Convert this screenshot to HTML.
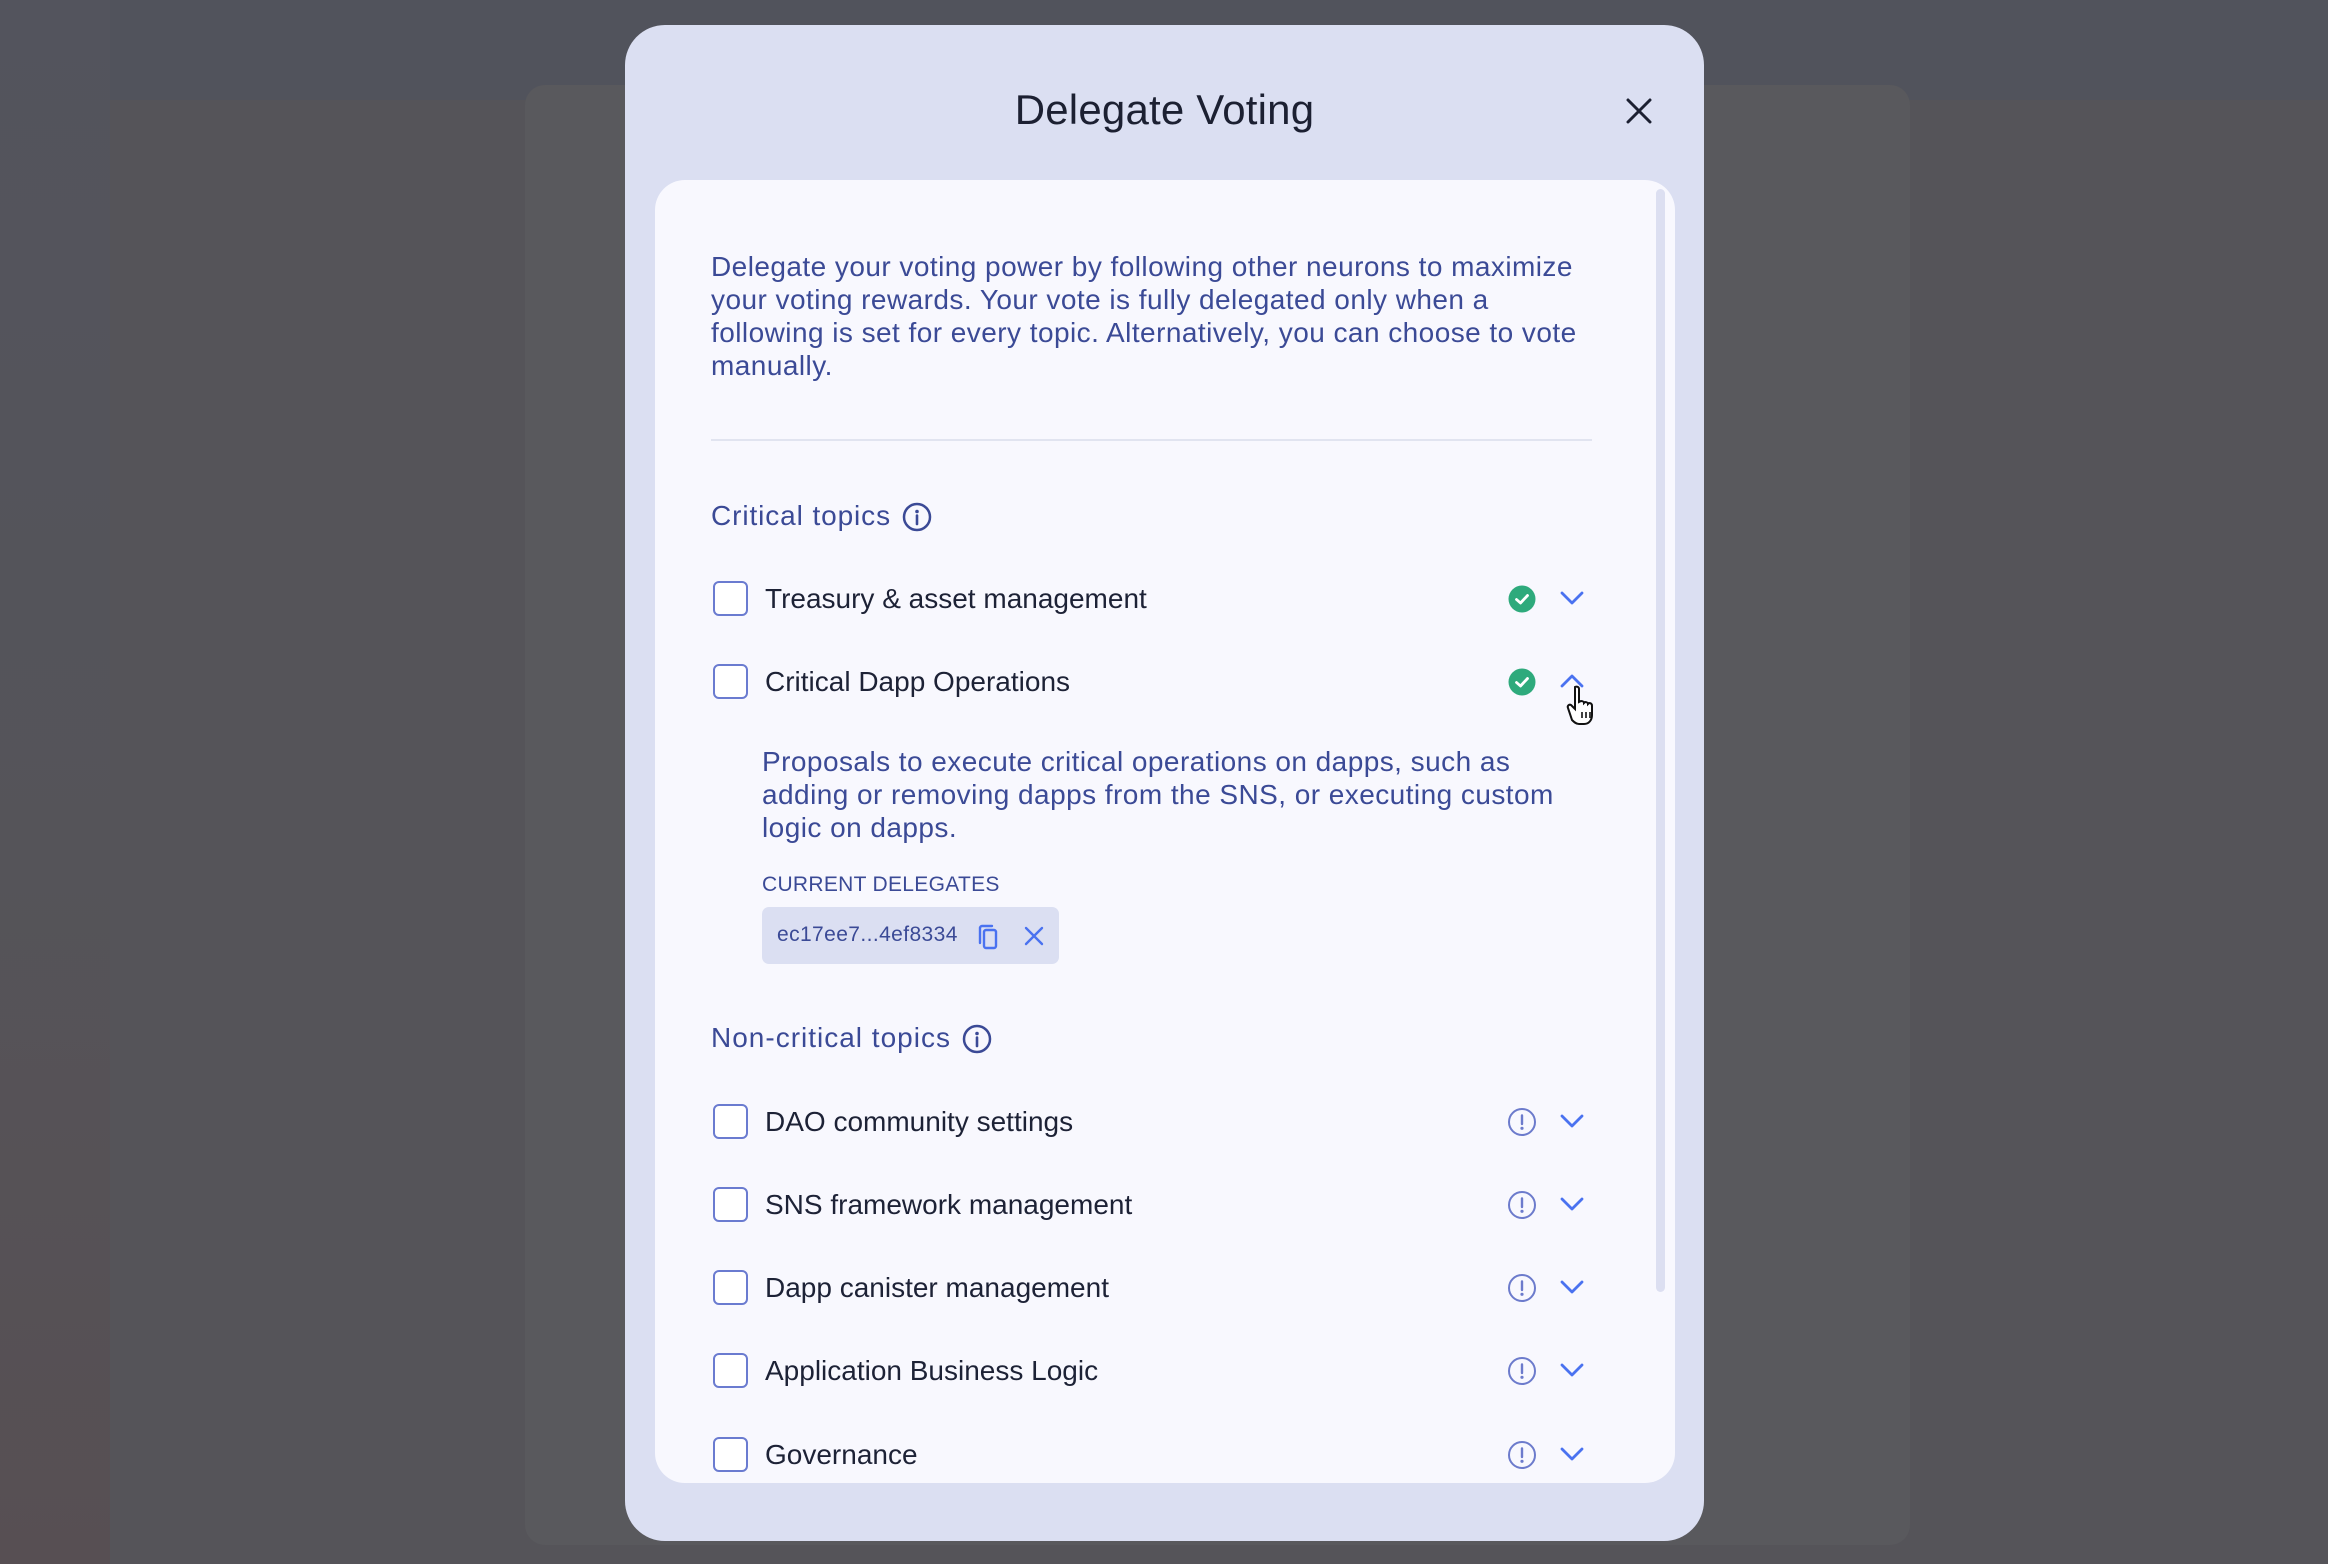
<!DOCTYPE html>
<html><head><meta charset="utf-8"><style>
*{margin:0;padding:0;box-sizing:border-box}
body{width:2328px;height:1564px;overflow:hidden;background:#555459;font-family:"Liberation Sans",sans-serif;position:relative}
.abs{position:absolute}
.t{color:#3b4a96}
.row{position:absolute;left:713px;height:35px;width:900px}
.cb{position:absolute;left:0;top:0;width:35px;height:35px;border:2px solid #6a7bd0;border-radius:6px;background:#fff}
.lbl{position:absolute;left:52px;top:0;line-height:35px;font-size:28px;color:#1d2236;white-space:nowrap}
.st{position:absolute;left:795px;top:4px}
.ch{position:absolute;left:847px;top:10px}
.desc{font-size:28px;letter-spacing:0.45px;line-height:33px;white-space:nowrap}
</style></head><body>
<div class="abs" style="left:0;top:0;width:2328px;height:100px;background:#51535c"></div>
<div class="abs" style="left:0;top:0;width:110px;height:1564px;background:linear-gradient(#53545d 0%,#555459 55%,#574f53 100%)"></div>
<div class="abs" style="left:525px;top:85px;width:1385px;height:1460px;background:#59595d;border-radius:20px"></div>
<div class="abs" style="left:625px;top:25px;width:1079px;height:1516px;background:#dbdff2;border-radius:40px"></div>
<div class="abs" style="left:625px;top:85px;width:1079px;text-align:center;font-size:42px;letter-spacing:0.2px;color:#1c2032;line-height:50px">Delegate Voting</div>
<svg class="abs" style="left:1626px;top:98px" width="26" height="26" viewBox="0 0 26 26"><path d="M2 2L24 24M24 2L2 24" stroke="#1c2032" stroke-width="3" stroke-linecap="round"/></svg>
<div class="abs" style="left:655px;top:180px;width:1020px;height:1303px;background:#f8f8fe;border-radius:30px"></div>
<div class="abs" style="left:1656px;top:189px;width:9px;height:1103px;background:#dcdff1;border-radius:5px"></div>
<div class="abs t desc" style="left:711px;top:250px">Delegate your voting power by following other neurons to maximize<br>your voting rewards. Your vote is fully delegated only when a<br>following is set for every topic. Alternatively, you can choose to vote<br>manually.</div>
<div class="abs" style="left:711px;top:439px;width:881px;height:2px;background:#e1e4f0"></div>
<div class="abs t" style="left:711px;top:498px;font-size:28px;letter-spacing:0.9px;line-height:36px">Critical topics</div>
<svg class="abs" style="left:902px;top:502px" width="30" height="30" viewBox="0 0 30 30"><circle cx="15" cy="15" r="13" fill="none" stroke="#3b4a96" stroke-width="2.5"/><circle cx="15" cy="9.5" r="1.8" fill="#3b4a96"/><path d="M15 13.5V22" stroke="#3b4a96" stroke-width="2.6" stroke-linecap="round"/></svg>

<svg width="0" height="0" style="position:absolute"><defs>
<g id="ok"><circle cx="14" cy="14" r="13.5" fill="#2eaa7c"/><path d="M8.5 14.5L12.5 18L19.5 10.5" fill="none" stroke="#fff" stroke-width="2.8" stroke-linecap="round" stroke-linejoin="round"/></g>
<g id="warn"><circle cx="14" cy="14" r="13" fill="none" stroke="#6c7bcc" stroke-width="2"/><path d="M14 7.5V16" stroke="#6c7bcc" stroke-width="2.4" stroke-linecap="round"/><circle cx="14" cy="20.3" r="1.6" fill="#6c7bcc"/></g>
<g id="dn"><path d="M2 2L12 12L22 2" fill="none" stroke="#4a72f0" stroke-width="2.8" stroke-linecap="round" stroke-linejoin="round"/></g>
<g id="up"><path d="M2 12L12 2L22 12" fill="none" stroke="#4a72f0" stroke-width="2.8" stroke-linecap="round" stroke-linejoin="round"/></g>
</defs></svg>

<div class="row" style="top:581px"><div class="cb"></div><div class="lbl">Treasury &amp; asset management</div>
<svg class="st" width="28" height="28"><use href="#ok"/></svg><svg class="ch" width="24" height="16"><use href="#dn"/></svg></div>
<div class="row" style="top:664px"><div class="cb"></div><div class="lbl">Critical Dapp Operations</div>
<svg class="st" width="28" height="28"><use href="#ok"/></svg><svg class="ch" width="24" height="16"><use href="#up"/></svg></div>
<svg class="abs" style="left:1565px;top:684px" width="36" height="42" viewBox="0 0 36 42"><path d="M10 3c2-1 4 0 4 2v13l2-1c2 0 3 1 3 2l1-1c2 0 3 1 3 2l1-1c2 0 3 1 3 3v9c0 5-3 9-8 9h-5c-3 0-5-2-7-4L3 24c-1-2 1-4 3-3l4 4V5z" fill="#fff" stroke="#111" stroke-width="2"/><path d="M17 28v6M21 28v6M25 28v6" stroke="#111" stroke-width="1.6"/></svg>

<div class="abs t desc" style="left:762px;top:745px">Proposals to execute critical operations on dapps, such as<br>adding or removing dapps from the SNS, or executing custom<br>logic on dapps.</div>
<div class="abs t" style="left:762px;top:872px;font-size:21px;letter-spacing:0.3px;line-height:26px">CURRENT DELEGATES</div>
<div class="abs" style="left:762px;top:907px;width:297px;height:57px;background:#dbdff2;border-radius:7px"></div>
<div class="abs t" style="left:777px;top:921px;font-size:21px;letter-spacing:0.4px;line-height:28px">ec17ee7...4ef8334</div>
<svg class="abs" style="left:976px;top:924px" width="24" height="26" viewBox="0 0 24 26"><path d="M4 19V4c0-1 1-2 2-2h10" fill="none" stroke="#4a72f0" stroke-width="2.4" stroke-linecap="round"/><rect x="8" y="6" width="12" height="18" rx="2" fill="none" stroke="#4a72f0" stroke-width="2.4"/></svg>
<svg class="abs" style="left:1024px;top:926px" width="20" height="20" viewBox="0 0 20 20"><path d="M2 2L18 18M18 2L2 18" stroke="#4a72f0" stroke-width="2.4" stroke-linecap="round"/></svg>

<div class="abs t" style="left:711px;top:1020px;font-size:28px;letter-spacing:1px;line-height:36px">Non-critical topics</div>
<svg class="abs" style="left:962px;top:1024px" width="30" height="30" viewBox="0 0 30 30"><circle cx="15" cy="15" r="13" fill="none" stroke="#3b4a96" stroke-width="2.5"/><circle cx="15" cy="9.5" r="1.8" fill="#3b4a96"/><path d="M15 13.5V22" stroke="#3b4a96" stroke-width="2.6" stroke-linecap="round"/></svg>

<div class="row" style="top:1104px"><div class="cb"></div><div class="lbl">DAO community settings</div>
<svg class="st" width="28" height="28"><use href="#warn"/></svg><svg class="ch" width="24" height="16"><use href="#dn"/></svg></div>
<div class="row" style="top:1187px"><div class="cb"></div><div class="lbl">SNS framework management</div>
<svg class="st" width="28" height="28"><use href="#warn"/></svg><svg class="ch" width="24" height="16"><use href="#dn"/></svg></div>
<div class="row" style="top:1270px"><div class="cb"></div><div class="lbl">Dapp canister management</div>
<svg class="st" width="28" height="28"><use href="#warn"/></svg><svg class="ch" width="24" height="16"><use href="#dn"/></svg></div>
<div class="row" style="top:1353px"><div class="cb"></div><div class="lbl">Application Business Logic</div>
<svg class="st" width="28" height="28"><use href="#warn"/></svg><svg class="ch" width="24" height="16"><use href="#dn"/></svg></div>
<div class="row" style="top:1437px"><div class="cb"></div><div class="lbl">Governance</div>
<svg class="st" width="28" height="28"><use href="#warn"/></svg><svg class="ch" width="24" height="16"><use href="#dn"/></svg></div>
</body></html>
